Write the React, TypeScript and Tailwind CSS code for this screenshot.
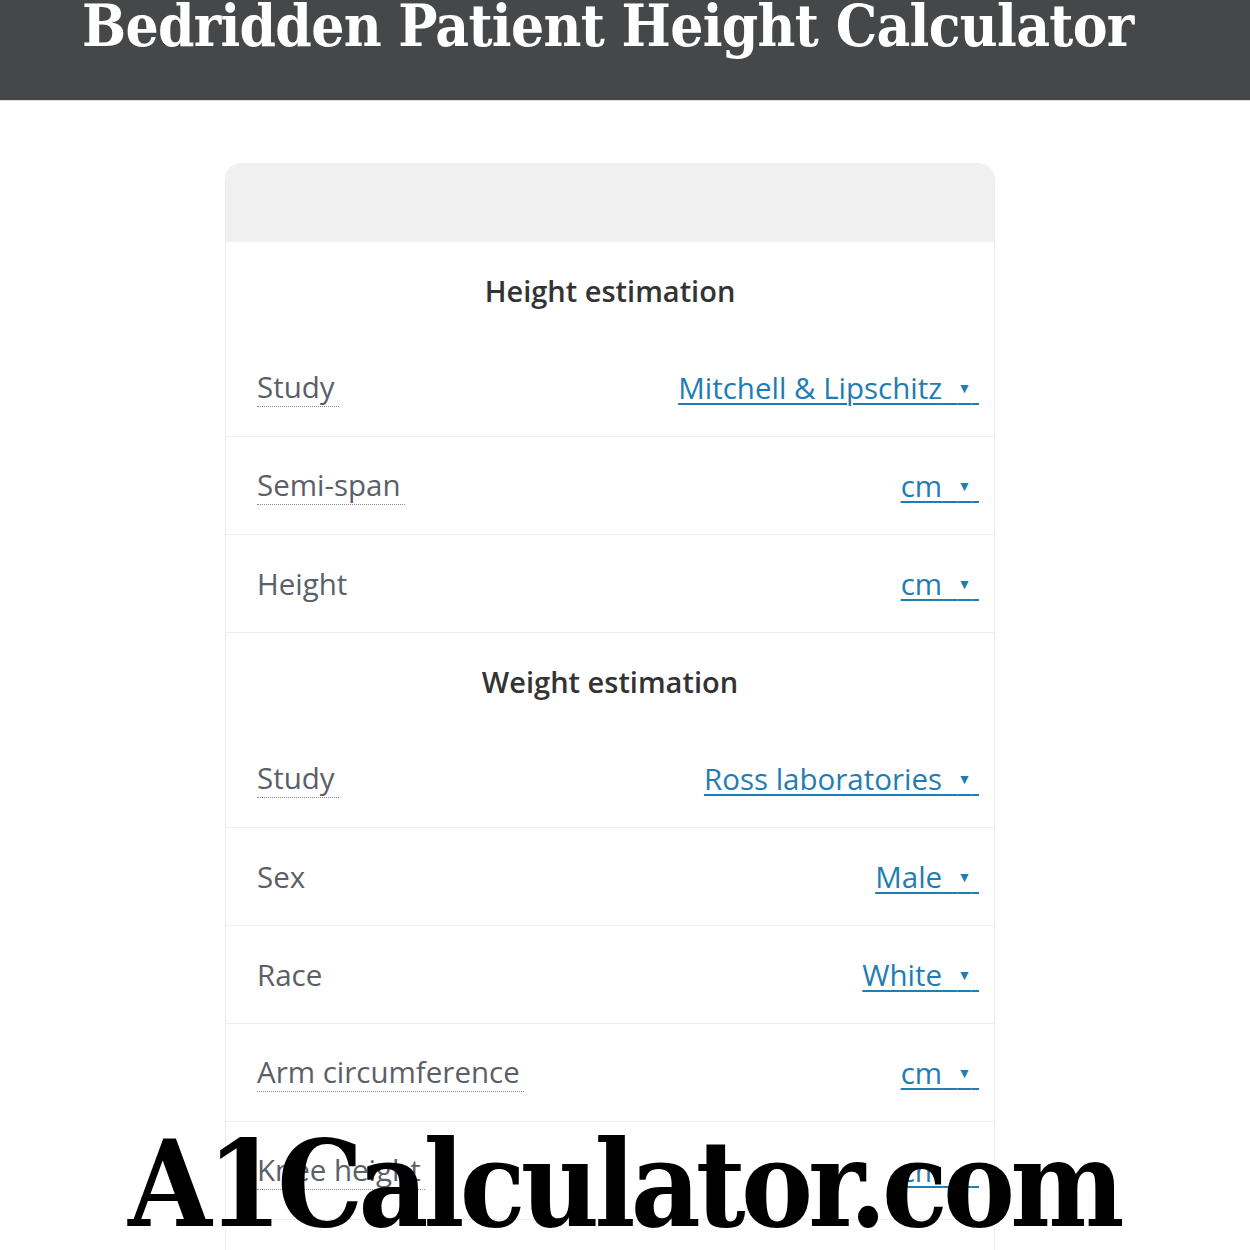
import React from 'react';

type Row = {
  label: string;
  value: string;
  hint?: boolean;
};

const heightRows: Row[] = [
  { label: 'Study', value: 'Mitchell & Lipschitz', hint: true },
  { label: 'Semi-span', value: 'cm', hint: true },
  { label: 'Height', value: 'cm' },
];

const weightRows: Row[] = [
  { label: 'Study', value: 'Ross laboratories', hint: true },
  { label: 'Sex', value: 'Male' },
  { label: 'Race', value: 'White' },
  { label: 'Arm circumference', value: 'cm', hint: true },
  { label: 'Knee height', value: 'cm', hint: true },
];

const slab = { fontFamily: '"DejaVu Serif Condensed", "DejaVu Serif", serif', fontStretch: 'condensed' };

const FieldRow = ({ row }: { row: Row }) => (
  <div className="flex h-[98px] items-center justify-between border-b border-[#efefef] pl-[31px] pr-[15px]">
    <span
      className={
        row.hint
          ? 'text-[29.5px] leading-[38px] text-[#5b6068] border-b border-dotted border-[#8a8a8a] pr-[4px]'
          : 'text-[29.5px] leading-[38px] text-[#5b6068]'
      }
    >
      {row.label}
    </span>
    <span className="mt-[1px] cursor-pointer text-[29.5px] leading-[38px] text-[#1f7db3] underline decoration-2 underline-offset-[4px]">
      {row.value}
      {'\u00a0\u00a0'}
      <span className="relative -top-[6px] text-[14px] leading-[0]">▼</span>
      {'\u00a0'}
    </span>
  </div>
);

const Section = ({ title, rows }: { title: string; rows: Row[] }) => (
  <section>
    <h2 className="flex h-[97px] items-center justify-center text-[29px] font-semibold text-[#333]">{title}</h2>
    {rows.map((r) => (
      <FieldRow key={r.label + r.value} row={r} />
    ))}
  </section>
);

export default function App() {
  return (
    <div className="relative h-[1250px] overflow-hidden bg-white" style={{ fontFamily: '"Open Sans", "Noto Sans", sans-serif' }}>
      <header className="h-[101px] overflow-hidden border-b border-[#dcdcdc] bg-[#464748]">
        <h1
          className="-mt-[12px] pl-[82px] whitespace-nowrap text-[58px] font-bold leading-[76px] tracking-[-0.7px] text-white"
          style={slab}
        >
          Bedridden Patient Height Calculator
        </h1>
      </header>

      <main className="ml-[225px] mt-[62px] w-[770px]">
        <div className="rounded-t-[16px] border border-[#ececec]">
          <div className="h-[78px] rounded-t-[16px] bg-[#f0f0f0]" />
          <Section title="Height estimation" rows={heightRows} />
          <Section title="Weight estimation" rows={weightRows} />
          <div className="h-[100px]" />
        </div>
      </main>

      {/* site watermark */}
      <div
        className="pointer-events-none absolute left-[128px] top-[1114px] whitespace-nowrap text-[120px] font-bold leading-[140px] tracking-[-4.8px] text-black"
        style={slab}
      >
        A1Calculator.com
      </div>
    </div>
  );
}
